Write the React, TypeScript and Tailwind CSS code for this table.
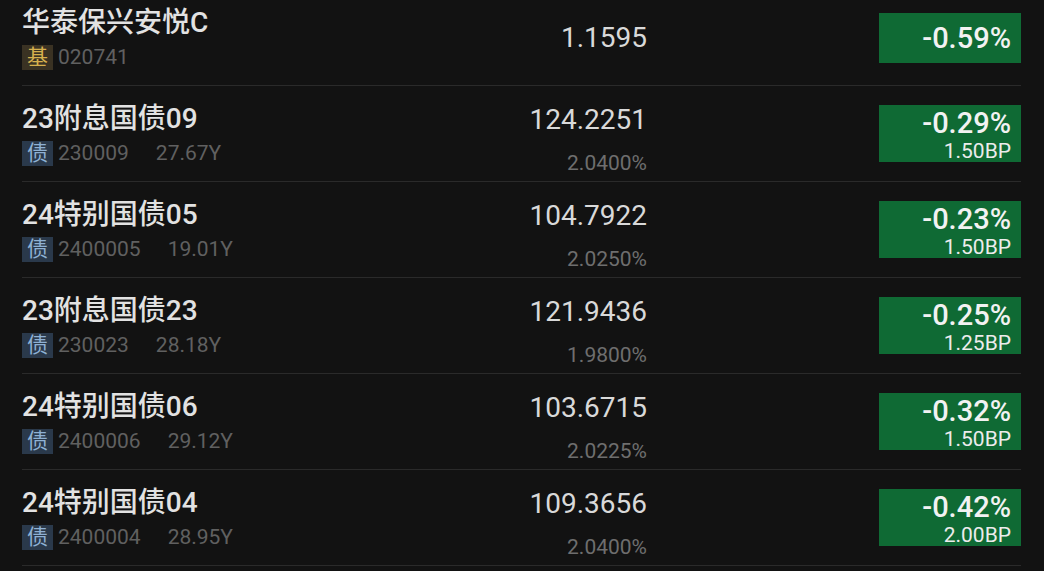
import React from "react";

type Row = {
  name: string;
  kind: "fund" | "bond";
  code: string;
  years?: string;
  price: string;
  yld?: string;
  pct: string;
  bp?: string;
};

const rows: Row[] = [
  { name: "华泰保兴安悦C", kind: "fund", code: "020741", price: "1.1595", pct: "-0.59%" },
  { name: "23附息国债09", kind: "bond", code: "230009", years: "27.67Y", price: "124.2251", yld: "2.0400%", pct: "-0.29%", bp: "1.50BP" },
  { name: "24特别国债05", kind: "bond", code: "2400005", years: "19.01Y", price: "104.7922", yld: "2.0250%", pct: "-0.23%", bp: "1.50BP" },
  { name: "23附息国债23", kind: "bond", code: "230023", years: "28.18Y", price: "121.9436", yld: "1.9800%", pct: "-0.25%", bp: "1.25BP" },
  { name: "24特别国债06", kind: "bond", code: "2400006", years: "29.12Y", price: "103.6715", yld: "2.0225%", pct: "-0.32%", bp: "1.50BP" },
  { name: "24特别国债04", kind: "bond", code: "2400004", years: "28.95Y", price: "109.3656", yld: "2.0400%", pct: "-0.42%", bp: "2.00BP" },
];

const font = { fontFamily: 'Roboto, "Noto Sans CJK SC", sans-serif' };

function RowItem({ r }: { r: Row }) {
  const isFund = r.kind === "fund";
  return (
    <div className="flex h-[96px] border-b border-[#2a2a2a]">
      <div className="flex flex-1 flex-col justify-center gap-[5px]">
        <div className="text-[28px] leading-[34px] font-medium text-[#e2e2e2] whitespace-nowrap">{r.name}</div>
        <div className="flex items-center h-[25px]">
          <span
            className={
              isFund
                ? "flex h-[25px] w-[31px] items-center justify-center bg-[#3a3223] text-[21px] leading-none text-[#d6b04e]"
                : "flex h-[25px] w-[31px] items-center justify-center bg-[#2a394b] text-[21px] leading-none text-[#8fb1d4]"
            }
          >
            {isFund ? "基" : "债"}
          </span>
          <span className="ml-[5px] text-[21px] leading-none text-[#606060]">{r.code}</span>
          {r.years && <span className="ml-[27px] text-[21px] leading-none text-[#606060]">{r.years}</span>}
        </div>
      </div>
      {isFund ? (
        <div className="flex w-[200px] items-center justify-end">
          <div className="text-[28px] leading-[36px] text-[#d9d9d9]">{r.price}</div>
        </div>
      ) : (
        <div className="flex w-[200px] flex-col items-end pt-[16px]">
          <div className="text-[28px] leading-[36px] text-[#d9d9d9]">{r.price}</div>
          <div className="mt-[11px] text-[21px] leading-[28px] text-[#6e6e6e]">{r.yld}</div>
        </div>
      )}
      <div className="ml-[232px] flex items-center">
        {isFund ? (
          <div className="flex h-[50px] w-[142px] items-center justify-end bg-[#0f6a34] pr-[10px]">
            <span className="text-[29px] leading-[30px] font-medium text-[#f2f2f2]">{r.pct}</span>
          </div>
        ) : (
          <div className="flex h-[57px] w-[142px] flex-col items-end bg-[#0f6a34] pr-[10px] pt-[3px]">
            <span className="text-[29px] leading-[30px] font-medium text-[#f2f2f2]">{r.pct}</span>
            <span className="mt-[2px] text-[21px] leading-[22px] text-[#ececec]">{r.bp}</span>
          </div>
        )}
      </div>
    </div>
  );
}

export default function App() {
  return (
    <div className="h-[571px] w-[1044px] overflow-hidden bg-[#121212]" style={font}>
      <div className="-mt-[10px] pl-[22px] pr-[23px]">
        {rows.map((r) => (
          <RowItem key={r.code} r={r} />
        ))}
      </div>
    </div>
  );
}
